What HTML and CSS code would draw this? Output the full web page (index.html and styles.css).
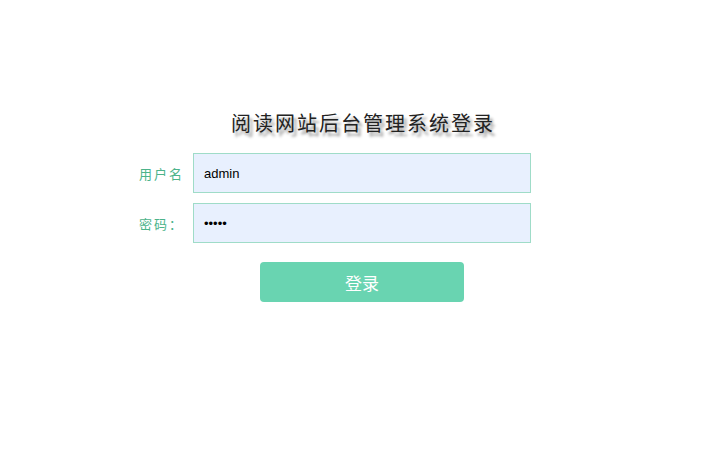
FILE: index.html
```html
<!DOCTYPE html>
<html lang="zh">
<head>
<meta charset="utf-8">
<title>阅读网站后台管理系统登录</title>
<link rel="stylesheet" href="styles.css">
</head>
<body>
<div class="login">
  <h1 class="title">阅读网站后台管理系统登录</h1>
  <div class="row">
    <label class="label">用户名</label>
    <input class="field" type="text" value="admin">
  </div>
  <div class="row row-pass">
    <label class="label">密码：</label>
    <input class="field" type="password" value="admin">
  </div>
  <div class="actions">
    <button class="btn">登录</button>
  </div>
</div>
</body>
</html>
```
FILE: styles.css
```css
html, body {
  margin: 0;
  padding: 0;
  background: #ffffff;
}
body {
  font-family: "Liberation Sans", Arial, "Noto Sans CJK SC", sans-serif;
}
.login {
  width: 392px;
  margin: 0 0 0 139px;
  padding-top: 108px;
}
.title {
  box-sizing: border-box;
  margin: 0 0 16px 54px;
  width: 338px;
  padding-left: 2px;
  text-align: center;
  font-size: 20px;
  letter-spacing: 2px;
  line-height: 29px;
  font-weight: normal;
  color: #222;
  font-family: "Noto Sans CJK SC", sans-serif;
  text-shadow: 3px 4px 3px #9a9a9a;
  white-space: nowrap;
}
.row {
  display: flex;
  align-items: center;
}
.row-pass {
  margin-top: 10px;
}
.label {
  width: 54px;
  font-size: 13px;
  letter-spacing: 2px;
  color: #4cb38a;
  font-family: "Noto Sans CJK SC", sans-serif;
}
.field {
  box-sizing: border-box;
  width: 338px;
  height: 40px;
  margin: 0;
  padding: 0 10px;
  border: 1px solid #9fdcc8;
  background: #e8f0fe;
  font-family: "Liberation Sans", Arial, sans-serif;
  font-size: 13px;
  color: #000;
  outline: none;
}
.actions {
  margin: 19px 0 0 54px;
  width: 338px;
  display: flex;
  justify-content: center;
}
.btn {
  width: 204px;
  height: 40px;
  border: none;
  border-radius: 4px;
  background: #69d4b1;
  color: #fff;
  font-size: 17px;
  font-family: "Noto Sans CJK SC", sans-serif;
  cursor: pointer;
}
```
